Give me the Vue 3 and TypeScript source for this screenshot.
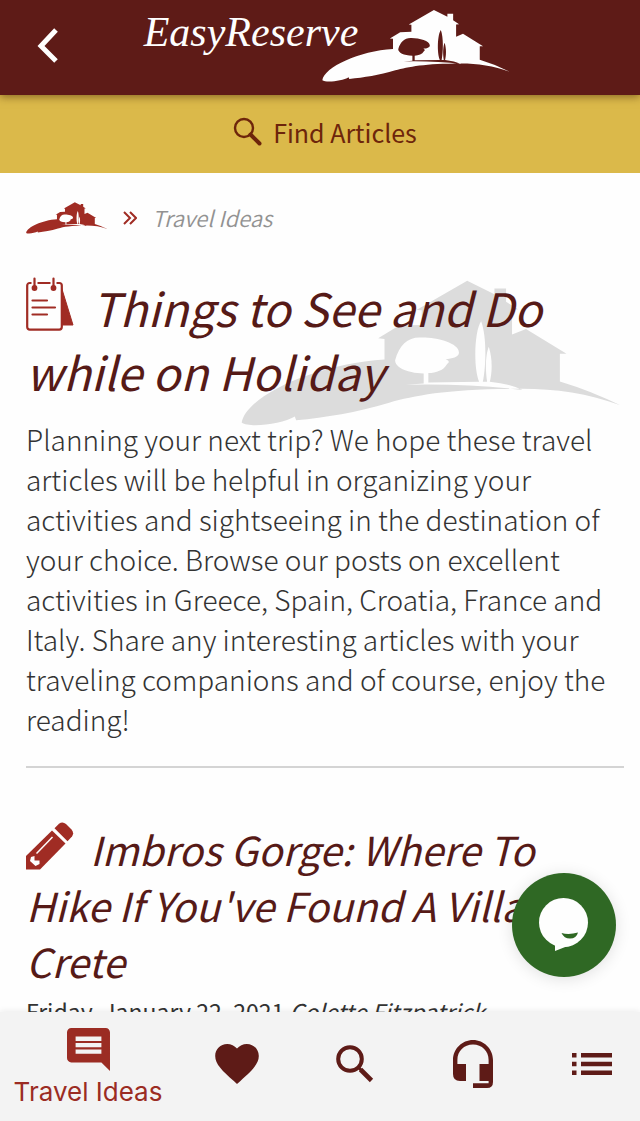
<script setup lang="ts">
import { h, ref, type FunctionalComponent } from 'vue'

const villaPaths = [
  'M36 490 C48 410 262 312 466 300 L466 238 L447 236 L510 198 L578 196 L578 152 L562 151 L715 63 L797 104 L797 86 L832 86 L832 126 L868 149 L850 151 L850 225 L892 208 L1014 283 L994 283 L994 366 Q1090 395 1176 438 C1080 402 980 388 880 388 C660 388 560 408 480 430 C380 460 290 474 200 483 L196 472 C160 494 60 508 36 490 Z',
  'M584 372 L584 342 C530 340 498 322 498 302 C510 258 535 234 572 234 C620 232 690 250 690 278 C692 292 670 298 650 299 C664 304 660 310 654 314 C644 332 622 340 598 341 L598 369 L751 367 C732 320 738 210 757 185 C774 230 772 320 762 367 L775 367 C768 320 772 282 780 262 C792 300 790 340 783 367 Q840 372 882 392 Q720 372 530 376 Z',
]

const VillaMark: FunctionalComponent = () =>
  h('svg', { viewBox: '34 61 1144 442', 'aria-hidden': 'true' }, [
    h('path', { 'fill-rule': 'evenodd', fill: 'currentColor', d: villaPaths.join(' ') }),
  ])

const intro =
  'Planning your next trip? We hope these travel articles will be helpful in organizing your activities and sightseeing in the destination of your choice. Browse our posts on excellent activities in Greece, Spain, Croatia, France and Italy. Share any interesting articles with your traveling companions and of course, enjoy the reading!'

const article = {
  title: "Imbros Gorge: Where To Hike If You've Found A Villa In Crete",
  date: 'Friday, January 22, 2021',
  author: 'Colette Fitzpatrick',
}

const active = ref('ideas')
</script>

<template>
  <div class="app">
    <header class="topbar">
      <button class="back" type="button" aria-label="Back">
        <svg viewBox="0 0 22 36"><path d="M19 2 L4 18 L19 33" fill="none" stroke="currentColor" stroke-width="5" /></svg>
      </button>
      <a class="brand" href="#home" aria-label="EasyReserve">
        <span class="brand-name">EasyReserve</span>
        <VillaMark class="brand-mark" />
      </a>
    </header>

    <button class="find" type="button">
      <svg viewBox="0 0 30 30" fill="none" stroke="currentColor">
        <circle cx="11" cy="11" r="9" stroke-width="2.4" />
        <path d="M17.5 17.5 L26.5 26.5" stroke-width="4" stroke-linecap="round" />
      </svg>
      <span>Find Articles</span>
    </button>

    <main class="content">
      <nav class="crumbs" aria-label="Breadcrumb">
        <a href="#home" aria-label="Home"><VillaMark class="crumb-mark" /></a>
        <svg class="chevrons" viewBox="0 0 14 14" fill="none" stroke="currentColor" stroke-width="2">
          <path d="M1 1 L7 7 L1 13 M7 1 L13 7 L7 13" />
        </svg>
        <span>Travel Ideas</span>
      </nav>

      <section class="intro">
        <VillaMark class="watermark" />
        <h1>
          <svg class="title-icon" viewBox="0 0 48 54" aria-hidden="true">
            <path d="M35 9 L47 48 H35 Z" fill="currentColor" stroke="currentColor" stroke-linejoin="round" />
            <rect x="1.2" y="6" width="34.6" height="46.6" rx="2.5" fill="#fefefe" stroke="currentColor" stroke-width="2.2" />
            <path d="M5.5 4 h6 v6 h-6z M24.500 4 h6 v6 h-6z" fill="#fefefe" />
            <g stroke="currentColor" stroke-linecap="round" stroke-width="2.2">
              <path d="M8.500 1.500 V10 M27.500 1.500 V10" />
              <path d="M6.500 23.500 H21 M6.500 30.500 H29 M6.500 37.500 H21" />
            </g>
            <circle cx="8.500" cy="11" r="2.900" fill="currentColor" />
            <circle cx="27.500" cy="11" r="2.900" fill="currentColor" />
          </svg>Things to See and Do while on Holiday
        </h1>
        <p>{{ intro }}</p>
      </section>

      <hr />

      <article class="post">
        <h2>
          <svg class="post-icon" viewBox="0 0 48 48" aria-hidden="true">
            <path d="M0 34 L26 8.500 L39.500 21.500 L14 47.500 H0 Z" fill="currentColor" />
            <path d="M28.500 6.200 L33 1.800 Q36.500 -1 40 2 L45.500 7.500 Q48.500 11 46 14.500 L41.500 19.200 Z" fill="currentColor" />
            <path d="M10.500 31.500 L26.500 15" stroke="#fefefe" stroke-width="1.500" />
            <path d="M5 35 L8.500 34 V38.500 H13.500 V42 L9.500 44 L4 39 Z" fill="#fefefe" />
          </svg>{{ article.title }}
        </h2>
        <p class="meta">{{ article.date }} <em>{{ article.author }}</em></p>
      </article>
    </main>

    <button class="chat" type="button" aria-label="Open chat">
      <svg viewBox="0 0 50 54">
        <ellipse cx="24.500" cy="24.500" rx="24.500" ry="24.500" fill="#fefefe" />
        <path d="M13 44 Q16 45.500 16 47.500 V53 L39 44 L30 36 Z" fill="#fefefe" />
        <path d="M22.500 35 Q30 37 39 34.500 Q37.500 40.500 31 40.500 Q25 40.500 22.500 35 Z" fill="#2f6824" />
      </svg>
    </button>

    <nav class="tabs" aria-label="Main">
      <a href="#ideas" class="tab labelled" :class="{ active: active === 'ideas' }" @click="active = 'ideas'">
        <svg class="i-ideas" viewBox="2 2 20 20"><path fill="currentColor" d="M21.990 4c0-1.100-.890-2-1.990-2H4c-1.100 0-2 .900-2 2v12c0 1.100.900 2 2 2h14l4 4-.010-18zM18 14H6v-2h12v2zm0-3H6V9h12v2zm0-3H6V6h12v2z" /></svg>
        <span>Travel Ideas</span>
      </a>
      <a href="#favorites" class="tab" :class="{ active: active === 'favorites' }" aria-label="Favorites" @click="active = 'favorites'">
        <svg class="i-heart" viewBox="2 3 20 18.350"><path fill="currentColor" d="M12 21.350l-1.450-1.320C5.400 15.360 2 12.280 2 8.500 2 5.420 4.420 3 7.500 3c1.740 0 3.410.810 4.500 2.090C13.090 3.810 14.760 3 16.500 3 19.580 3 22 5.420 22 8.500c0 3.780-3.400 6.860-8.550 11.540L12 21.350z" /></svg>
      </a>
      <a href="#search" class="tab" :class="{ active: active === 'search' }" aria-label="Search" @click="active = 'search'">
        <svg class="i-search" viewBox="0 0 38 38" fill="none" stroke="currentColor">
          <circle cx="14" cy="14" r="11.800" stroke-width="4" />
          <path d="M24.500 24.500 L35.500 35.500" stroke-width="4.600" />
          <path d="M22 22 L26 26" stroke-width="3" />
        </svg>
      </a>
      <a href="#support" class="tab" :class="{ active: active === 'support' }" aria-label="Support" @click="active = 'support'">
        <svg class="i-support" viewBox="0 0 40 48">
          <path fill="currentColor" d="M20 0 C9 0 0 9 0 20 V34 Q0 41 7 41 H13 V24 H4.400 V20 C4.400 11 11 4.400 20 4.400 S35.600 11 35.600 20 V24 H26.500 V41 H35.600 V43.300 H20 V48 H34 Q40 48 40 42 V20 C40 9 31 0 20 0 Z" />
        </svg>
      </a>
      <a href="#menu" class="tab" :class="{ active: active === 'menu' }" aria-label="Menu" @click="active = 'menu'">
        <svg class="i-menu" viewBox="0 0 40 22"><path fill="currentColor" d="M0 0h4.500v4.500H0zM9 0h31v4.500H9zM0 8.800h4.500v4.500H0zM9 8.800h31v4.500H9zM0 17.500h4.500V22H0zM9 17.500h31V22H9z" /></svg>
      </a>
    </nav>
  </div>
</template>

<style>
body {
  margin: 0;
  background: #fefefe;
}
</style>

<style scoped>
.app {
  display: flex;
  flex-direction: column;
  height: 100vh;
  overflow: hidden;
  position: relative;
  background: #fefefe;
  color: #333;
  font-family: "Noto Sans CJK JP", "Noto Sans", sans-serif;
}
.app * {
  box-sizing: border-box;
}
svg {
  display: block;
}
button {
  border: 0;
  padding: 0;
  font: inherit;
  cursor: pointer;
}
a {
  color: inherit;
  text-decoration: none;
}
.topbar {
  flex: none;
  display: grid;
  grid-template-columns: 1fr auto 1fr;
  height: 95px;
  padding: 0 24px;
  background: #5e1b17;
  color: #fefefe;
  box-shadow: 0 2px 8px rgba(60, 30, 0, 0.5);
  z-index: 1;
}
.back {
  width: 48px;
  height: 92px;
  display: grid;
  place-items: center;
  background: none;
  color: inherit;
}
.back svg {
  width: 22px;
  height: 36px;
}
.brand {
  grid-column: 2;
  display: flex;
  align-items: flex-start;
  padding-top: 8px;
  margin-left: 14px;
}
.brand-name {
  font: italic 42px/48px "Liberation Serif", serif;
}
.brand-mark {
  width: 188px;
  height: 76px;
  margin-left: -36px;
}
.find {
  flex: none;
  display: flex;
  align-items: center;
  justify-content: center;
  gap: 10px;
  height: 78px;
  margin: 0;
  padding: 0 0 4px 10px;
  background: #dbb94a;
  color: #6d250b;
  font-size: 25px;
}
.find svg {
  width: 30px;
  height: 30px;
}
.content {
  flex: 1;
  min-height: 0;
  overflow: auto;
  scrollbar-width: none;
  padding: 26px 16px 0 26px;
}
.crumbs {
  display: flex;
  align-items: center;
  gap: 15px;
  height: 38px;
  color: #a02c24;
}
.crumbs span {
  color: #929292;
  font-size: 22px;
  line-height: 36px;
  padding-bottom: 2px;
  font-style: italic;
  font-weight: 350;
}
.crumb-mark {
  width: 82px;
  height: 34px;
}
.chevrons {
  width: 14px;
  height: 14px;
}
.intro {
  position: relative;
  padding-top: 38px;
}
.watermark {
  position: absolute;
  top: 43px;
  right: 3px;
  width: 380px;
  height: 147px;
  color: #dcdcdc;
}
h1,
h2 {
  position: relative;
  margin: 0;
  color: #561a17;
  font-weight: 400;
  font-style: italic;
}
h1 {
  font-size: 46px;
  line-height: 64px;
}
h2 {
  font-size: 40px;
  line-height: 56px;
}
.title-icon,
.post-icon {
  display: inline-block;
  width: 48px;
  vertical-align: -4px;
  color: #a02c24;
}
.title-icon {
  height: 54px;
  margin-right: 18px;
}
.post-icon {
  height: 48px;
  margin-right: 16px;
}
.intro p {
  position: relative;
  margin: 16px 0 0;
  font-size: 28px;
  font-weight: 300;
  line-height: 40px;
}
hr {
  height: 2px;
  margin: 27px 0 0;
  border: 0;
  background: #d4d4d4;
}
.post {
  padding-top: 53px;
}
.meta {
  margin: 2px 0 0;
  font-size: 23px;
  line-height: 40px;
}
.chat {
  position: absolute;
  right: 24px;
  bottom: 144px;
  width: 104px;
  height: 104px;
  display: grid;
  place-items: center;
  border-radius: 50%;
  background: #2f6824;
  box-shadow: 0 2px 16px rgba(0, 0, 0, 0.12);
}
.chat svg {
  width: 50px;
  height: 54px;
}
.tabs {
  flex: none;
  display: grid;
  grid-template-columns: 176fr 121fr 116fr 120fr 107fr;
  height: 109px;
  background: #f3f3f3;
  box-shadow: 0 -1px 6px rgba(0, 0, 0, 0.08);
  color: #5e1b17;
  z-index: 1;
}
.tab {
  display: flex;
  flex-direction: column;
  align-items: center;
  justify-content: center;
  gap: 5px;
  padding-bottom: 6px;
  font: 26px/32px Inter, sans-serif;
}
.tab.labelled {
  padding: 2px 0 0;
}
.tab:last-child {
  padding-left: 10px;
}
.tab.active {
  color: #9b2c23;
}
.tab span {
  white-space: nowrap;
}
.i-ideas {
  width: 43px;
  height: 43px;
}
.i-heart {
  width: 44px;
  height: 40px;
}
.i-search {
  width: 38px;
  height: 38px;
}
.i-support {
  width: 40px;
  height: 48px;
}
.i-menu {
  width: 40px;
  height: 22px;
}
</style>
